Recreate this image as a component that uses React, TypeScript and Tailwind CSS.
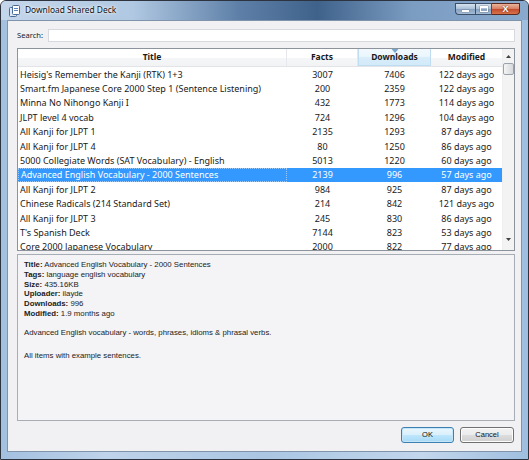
import React from "react";

type Deck = {
  title: string;
  facts: string;
  downloads: string;
  modified: string;
};

const DECKS: Deck[] = [
  { title: "Heisig's Remember the Kanji (RTK) 1+3", facts: "3007", downloads: "7406", modified: "122 days ago" },
  { title: "Smart.fm Japanese Core 2000 Step 1 (Sentence Listening)", facts: "200", downloads: "2359", modified: "122 days ago" },
  { title: "Minna No Nihongo Kanji I", facts: "432", downloads: "1773", modified: "114 days ago" },
  { title: "JLPT level 4 vocab", facts: "724", downloads: "1296", modified: "104 days ago" },
  { title: "All Kanji for JLPT 1", facts: "2135", downloads: "1293", modified: "87 days ago" },
  { title: "All Kanji for JLPT 4", facts: "80", downloads: "1250", modified: "86 days ago" },
  { title: "5000 Collegiate Words (SAT Vocabulary) - English", facts: "5013", downloads: "1220", modified: "60 days ago" },
  { title: "Advanced English Vocabulary - 2000 Sentences", facts: "2139", downloads: "996", modified: "57 days ago" },
  { title: "All Kanji for JLPT 2", facts: "984", downloads: "925", modified: "87 days ago" },
  { title: "Chinese Radicals (214 Standard Set)", facts: "214", downloads: "842", modified: "121 days ago" },
  { title: "All Kanji for JLPT 3", facts: "245", downloads: "830", modified: "86 days ago" },
  { title: "T's Spanish Deck", facts: "7144", downloads: "823", modified: "53 days ago" },
  { title: "Core 2000 Japanese Vocabulary", facts: "2000", downloads: "822", modified: "77 days ago" },
];

const SELECTED = 7;

const DETAILS: [string, string][] = [
  ["Title", "Advanced English Vocabulary - 2000 Sentences"],
  ["Tags", "language english vocabulary"],
  ["Size", "435.16KB"],
  ["Uploader", "ilayde"],
  ["Downloads", "996"],
  ["Modified", "1.9 months ago"],
];

function DeckIcon() {
  return (
    <svg width="11" height="12" viewBox="0 0 11 12">
      <rect x="0.5" y="2.5" width="7" height="9" rx="1" fill="#dfe9f5" stroke="#4b6b93" />
      <rect x="3.5" y="0.5" width="7" height="9" rx="1" fill="#ffffff" stroke="#4b6b93" />
      <rect x="5" y="3" width="4" height="1" fill="#5b86bd" />
      <rect x="5" y="5" width="4" height="1" fill="#5b86bd" />
    </svg>
  );
}

function WindowControls() {
  return (
    <div className="mt-[2px] flex h-[12px] self-start">
      <div className="flex w-[20px] items-center justify-center rounded-bl-[4px] border border-r-0 border-[#3d506a] bg-[linear-gradient(180deg,#d6e2ef_0%,#aec2d9_45%,#86a0bf_50%,#a3bbd6_100%)]">
        <div className="mt-[4px] h-[2px] w-[7px] bg-white shadow-[0_0_1px_#333]" />
      </div>
      <div className="flex w-[17px] items-center justify-center border border-[#3d506a] bg-[linear-gradient(180deg,#d6e2ef_0%,#aec2d9_45%,#86a0bf_50%,#a3bbd6_100%)]">
        <div className="h-[6px] w-[8px] border border-t-2 border-white shadow-[0_0_1px_#333]" />
      </div>
      <div className="flex w-[28px] items-center justify-center rounded-br-[4px] border border-l-0 border-[#5a2a1e] bg-[linear-gradient(180deg,#eab49c_0%,#d98366_45%,#c24a2c_50%,#d9734c_100%)]">
        <span className="text-[9px] font-bold leading-none text-white [font-family:'Liberation_Sans',sans-serif] [text-shadow:0_0_2px_#5a1e10]">
          X
        </span>
      </div>
    </div>
  );
}

export default function App() {
  return (
    <div className="flex h-[460px] w-[529px] flex-col overflow-hidden rounded-t-[6px] border border-[#2d3440] bg-[linear-gradient(90deg,#a3c0df_0%,#bfd3ea_20%,#aac6e3_50%,#c2d6ec_80%,#9fbedf_100%)] [font-family:'Noto_Sans',sans-serif]">
      {/* title bar */}
      <div className="flex h-[19px] shrink-0 items-center bg-[linear-gradient(90deg,#c4d6ea_0%,#b0c8e2_25%,#5e80a8_45%,#3f628b_60%,#7c9dc2_78%,#89aacd_100%)] pl-[8px] pr-[8px]">
        <DeckIcon />
        <span className="ml-[5px] text-[8.4px] text-[#111] [text-shadow:0_0_4px_#fff,0_0_2px_#fff]">
          Download Shared Deck
        </span>
        <div className="ml-auto flex h-full">
          <WindowControls />
        </div>
      </div>

      {/* client area */}
      <div className="mx-[6px] mb-[7px] flex flex-1 flex-col border border-[#7f93ab] bg-[#f1f1f3] pl-[9px] pr-[6px]">
        <div className="mt-[8px] flex h-[13px] items-center">
          <span className="w-[31px] text-[7.6px] text-[#222]">Search:</span>
          <div className="h-[13px] flex-1 border border-[#d6d9de] bg-white" />
        </div>

        {/* table */}
        <div className="mt-[6px] flex h-[203px] border border-[#8d939b] bg-white">
          <div className="flex w-[484px] flex-col overflow-hidden">
            <div className="flex h-[18px] shrink-0 border-b border-[#e2e4e7] bg-[linear-gradient(180deg,#ffffff_0%,#ffffff_50%,#f4f6f8_51%,#f2f3f5_100%)] text-[8.5px] font-bold text-[#1a1a1a]">
              <div className="flex w-[269px] items-center justify-center border-r border-[#e6e8eb]">Title</div>
              <div className="flex w-[71px] items-center justify-center border-r border-[#e6e8eb]">Facts</div>
              <div className="relative flex w-[73px] items-center justify-center border border-t-0 border-[#bfdcf0] bg-[linear-gradient(180deg,#f2f9fe_0%,#e9f5fd_50%,#d9edfa_51%,#d3eaf9_100%)]">
                <svg className="absolute left-1/2 top-0 -translate-x-1/2" width="7" height="4" viewBox="0 0 7 4">
                  <path d="M0 0 L7 0 L3.5 4 Z" fill="#7aa6cc" />
                </svg>
                Downloads
              </div>
              <div className="flex w-[71px] items-center justify-center">Modified</div>
            </div>
            {DECKS.map((d, i) => {
              const sel = i === SELECTED;
              return (
                <div
                  key={d.title}
                  className={
                    "flex h-[14.4px] shrink-0 items-center text-[9px] leading-none " +
                    (sel ? "bg-[#3399ff] text-white" : "text-[#1a1a1a]")
                  }
                >
                  <div
                    className={
                      "flex h-full w-[269px] items-center whitespace-nowrap pl-[2px] " +
                      (sel ? "border border-dotted border-[#9cc9f5]" : "")
                    }
                  >
                    {d.title}
                  </div>
                  <div className="w-[71px] text-center">{d.facts}</div>
                  <div className="w-[73px] text-center">{d.downloads}</div>
                  <div className="w-[71px] text-center">{d.modified}</div>
                </div>
              );
            })}
          </div>

          {/* scrollbar */}
          <div className="flex w-[12px] flex-col items-center border-l border-[#eceef0] bg-[#f3f3f4]">
            <div className="flex h-[14px] w-full items-center justify-center">
              <svg width="5" height="3" viewBox="0 0 5 3">
                <path d="M0 3 L2.5 0 L5 3 Z" fill="#404040" />
              </svg>
            </div>
            <div className="h-[12px] w-[11px] rounded-[2px] border border-[#9aa3ad] bg-[linear-gradient(90deg,#f5f5f5_0%,#e4e6e8_50%,#d6d9dd_100%)]" />
            <div className="flex-1" />
            <div className="mb-[6px] flex h-[10px] w-full items-center justify-center">
              <svg width="5" height="3" viewBox="0 0 5 3">
                <path d="M0 0 L5 0 L2.5 3 Z" fill="#404040" />
              </svg>
            </div>
          </div>
        </div>

        {/* details */}
        <div className="mt-[3px] h-[167px] border border-[#a7adb5] bg-[#f4f4f6] px-[6px] pt-[5px] text-[7.8px] leading-[9.8px] text-[#222] [font-family:'Liberation_Sans',sans-serif]">
          {DETAILS.map(([k, v]) => (
            <div key={k}>
              <span className="font-bold">{k}:</span> {v}
            </div>
          ))}
          <div className="mt-[9px]">Advanced English vocabulary - words, phrases, idioms &amp; phrasal verbs.</div>
          <div className="mt-[13px]">All items with example sentences.</div>
        </div>

        {/* buttons */}
        <div className="mt-[6px] flex justify-end gap-[6px] pr-[1px]">
          <button className="h-[16px] w-[53px] rounded-[3px] border border-[#3c7fb1] bg-[linear-gradient(180deg,#eaf6fd_0%,#d9f0fc_50%,#bee6fd_51%,#a7d9f5_100%)] text-[7.5px] text-[#111] shadow-[inset_0_0_0_1px_#c5e6f8] [font-family:'Liberation_Sans',sans-serif]">
            OK
          </button>
          <button className="h-[16px] w-[54px] rounded-[3px] border border-[#707070] bg-[linear-gradient(180deg,#f2f2f2_0%,#ebebeb_50%,#dddddd_51%,#cfcfcf_100%)] text-[7.5px] text-[#111] shadow-[inset_0_0_0_1px_#fcfcfc] [font-family:'Liberation_Sans',sans-serif]">
            Cancel
          </button>
        </div>
      </div>
    </div>
  );
}
